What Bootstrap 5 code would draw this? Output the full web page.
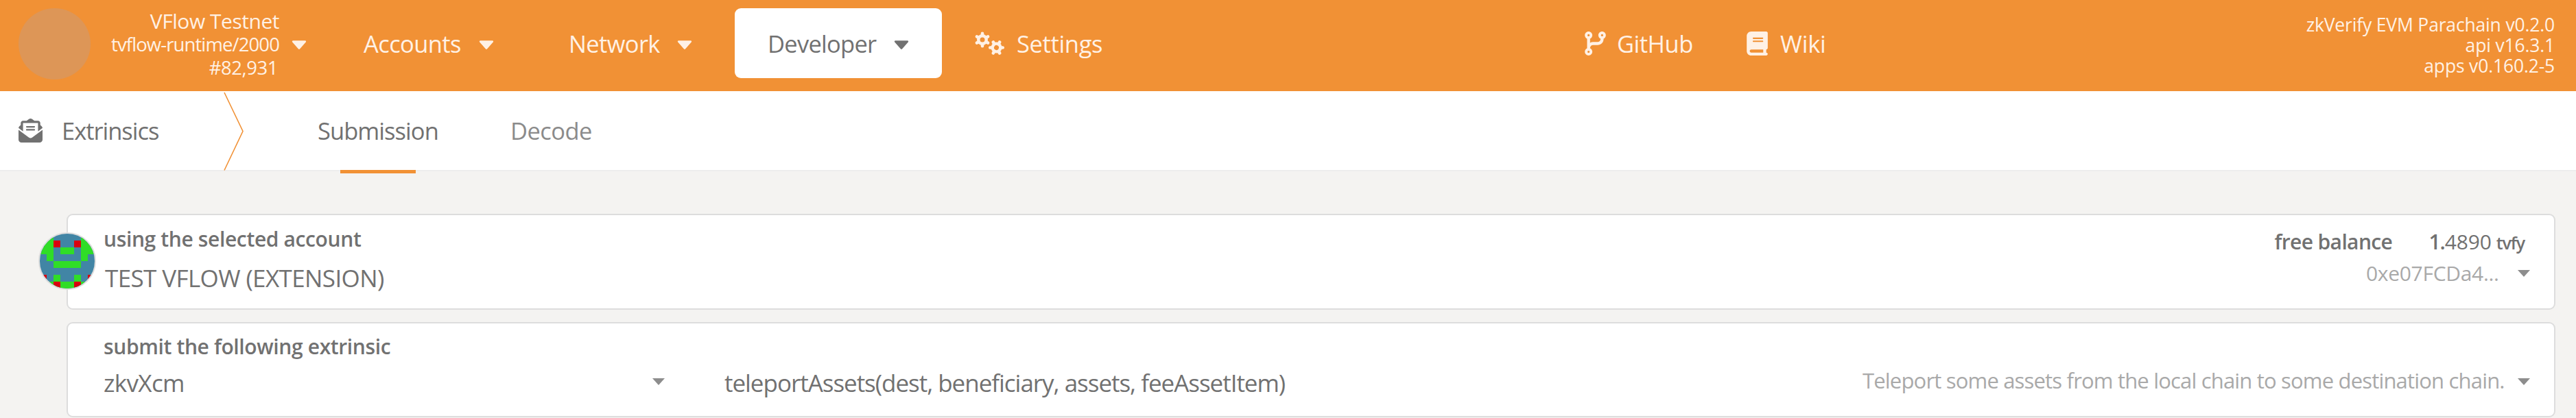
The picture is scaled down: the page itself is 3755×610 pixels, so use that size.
<!DOCTYPE html>
<html lang="en">
<head>
<meta charset="utf-8">
<title>Extrinsics</title>
<link href="https://cdn.jsdelivr.net/npm/bootstrap@5.3.0/dist/css/bootstrap.min.css" rel="stylesheet">
<style>
:root { --accent: #f19135; --ink: #717171; --pale: #fff1e5; }
body { background: #f4f3f1; color: var(--ink); font-family: "Open Sans", "Noto Sans", sans-serif; font-size: 34.5px; line-height: 1; overflow: hidden; }
svg { display: block; fill: currentColor; flex: none; }
.topbar { height: 133px; background: var(--accent); color: var(--pale); }
.topbar .brand-dot { width: 105px; height: 104px; margin: 12px 0 0 27px; background: #dd9657; }
.chain { width: 275px; padding-top: 14px; font-size: 27.5px; line-height: 34px; letter-spacing: -.9px; }
.chain .chain-name { font-size: 30px; letter-spacing: -.47px; }
.chain .best { letter-spacing: -.46px; padding-right: 2px; }
.tri { width: 22px; height: 35px; }
.menu-row { height: 102px; margin-top: 12px; line-height: 102px; letter-spacing: -.65px; }
.menu-row .item { padding-top: 2px; }
.menu-row .active-tab { width: 302px; height: 102px; padding-left: 48px; border-radius: 9px; background: #fff; color: var(--ink); letter-spacing: -.74px; }
.versions { padding-top: 21px; margin-right: 31px; font-size: 26.5px; line-height: 30px; letter-spacing: -.17px; }
.subbar { height: 117px; background: #fff; border-bottom: 2px solid #ededed; line-height: 115px; padding-left: 27px; }
.tab-on { width: 178px; }
.tab-on::after { content: ""; position: absolute; left: 33px; top: 115px; width: 110px; height: 5px; background: var(--accent); }
.panel { margin: 0 30px 18px 97px; background: #fff; border: 2px solid #ddd; border-radius: 9px; padding-left: 52px; }
.panel-a { margin-top: 62px; height: 140px; }
.panel-b { height: 139px; }
.lbl { font-size: 30px; font-weight: 600; line-height: 40px; letter-spacing: -.37px; }
.val { font-size: 35px; line-height: 50px; }
.hint { color: #a9a9a9; font-size: 30px; line-height: 40px; }
.drop { width: 0; height: 0; border: 9px solid transparent; border-top: 10px solid #8d8d8d; border-bottom: 0; flex: none; }
.ident { left: -43px; top: 25px; width: 84px; height: 84px; border: 2px solid #ddd; background: #4185a5; }
</style>
</head>
<body>
<header class="topbar d-flex align-items-start text-nowrap">
  <div class="brand-dot rounded-circle"></div>
  <div class="chain text-end">
    <div class="chain-name">VFlow Testnet</div>
    <div>tvflow-runtime/2000</div>
    <div class="best">#82,931</div>
  </div>
  <nav class="menu-row d-flex align-items-center">
    <svg class="tri" style="margin-left:18px" viewBox="0 0 320 512"><path id="caret" d="M31.3 192h257.3c17.8 0 26.7 21.5 14.1 34.1L174.1 374.8c-7.8 7.8-20.5 7.8-28.3 0L17.2 226.1C4.6 213.5 13.5 192 31.3 192z"/></svg>
    <div class="item" style="margin-left:83px;width:168px;letter-spacing:-.6px">Accounts</div>
    <svg class="tri" viewBox="0 0 320 512"><use href="#caret"/></svg>
    <div class="item" style="margin-left:109px;width:158px">Network</div>
    <svg class="tri" viewBox="0 0 320 512"><use href="#caret"/></svg>
    <div class="active-tab d-flex align-items-center" style="margin-left:62px">
      <div class="item" style="width:184px">Developer</div>
      <svg class="tri" viewBox="0 0 320 512"><use href="#caret"/></svg>
    </div>
    <svg style="margin-left:48px" width="43" height="35" viewBox="0 0 43 35">
      <g id="cog" transform="translate(11 12)" stroke="currentColor" stroke-width="4.6" stroke-linecap="round">
        <circle r="6" stroke-width="4"/>
        <path d="M0-9.2V9.2M-8-4.6L8 4.6M-8 4.6L8-4.6"/>
        <circle r="3.5" fill="#f19135" stroke="none"/>
      </g>
      <g transform="translate(31.5 23.5) rotate(30) translate(-11 -12)"><use href="#cog"/></g>
    </svg>
    <div class="item" style="margin-left:18px;width:126px;letter-spacing:-.35px">Settings</div>
    <svg style="margin-left:702px" width="31" height="35" viewBox="0 0 448 512"><path d="M80 104a24 24 0 1 0 0-48 24 24 0 1 0 0 48zm80-24c0 32.800-19.700 61-48 73.300v87.800c18.800-10.900 40.700-17.100 64-17.100h96c35.300 0 64-28.700 64-64v-6.700C307.700 141 288 112.800 288 80c0-44.200 35.800-80 80-80s80 35.800 80 80c0 32.800-19.700 61-48 73.300V160c0 70.700-57.300 128-128 128H176c-35.300 0-64 28.700-64 64v6.700c28.300 12.300 48 40.500 48 73.300c0 44.200-35.800 80-80 80s-80-35.800-80-80c0-32.800 19.700-61 48-73.300V352 153.300C19.700 141 0 112.800 0 80C0 35.800 35.800 0 80 0s80 35.800 80 80zm232 0a24 24 0 1 0-48 0 24 24 0 1 0 48 0zM80 456a24 24 0 1 0 0-48 24 24 0 1 0 0 48z"/></svg>
    <div class="item" style="margin-left:16px;width:110px;letter-spacing:-.5px">GitHub</div>
    <svg style="margin-left:79px" width="31" height="35" viewBox="0 0 448 512"><path d="M96 0C43 0 0 43 0 96V416c0 53 43 96 96 96H384h32c17.700 0 32-14.300 32-32s-14.300-32-32-32V384c17.700 0 32-14.300 32-32V32c0-17.700-14.300-32-32-32H384 96zm0 384H352v64H96c-17.700 0-32-14.300-32-32s14.300-32 32-32zm32-240c0-8.800 7.200-16 16-16H336c8.800 0 16 7.200 16 16s-7.200 16-16 16H144c-8.800 0-16-7.200-16-16zm16 48H336c8.800 0 16 7.200 16 16s-7.200 16-16 16H144c-8.800 0-16-7.200-16-16s7.200-16 16-16z"/></svg>
    <div class="item" style="margin-left:18px;letter-spacing:-.2px">Wiki</div>
  </nav>
  <div class="versions text-end ms-auto">
    <div>zkVerify EVM Parachain v0.2.0</div>
    <div>api v16.3.1</div>
    <div>apps v0.160.2-5</div>
  </div>
</header>

<div class="subbar d-flex align-items-center text-nowrap">
  <svg width="35" height="35" viewBox="0 0 512 512"><path d="M215.400 96H144 107.800 96v8.800V144v40.400 89L.2 202.500c1.600-18.100 10.900-34.900 25.700-45.800L48 140.300V96c0-26.500 21.500-48 48-48h76.600l49.900-36.900C232.200 3.900 243.900 0 256 0s23.800 3.900 33.500 11L339.400 48H416c26.500 0 48 21.500 48 48v44.300l22.100 16.400c14.800 10.900 24.100 27.700 25.700 45.800L416 273.400v-89V144 104.800 96H404.200 368 296.600 215.400zM0 448V242.100L217.600 403.300c11.100 8.200 24.600 12.700 38.400 12.700s27.300-4.400 38.400-12.700L512 242.100V448c0 35.300-28.700 64-64 64H64c-35.300 0-64-28.700-64-64zM176 160H336c8.800 0 16 7.200 16 16s-7.200 16-16 16H176c-8.800 0-16-7.200-16-16s7.200-16 16-16zm0 64H336c8.800 0 16 7.200 16 16s-7.200 16-16 16H176c-8.800 0-16-7.200-16-16s7.200-16 16-16z"/></svg>
  <div style="margin-left:28px;width:236px;letter-spacing:-1.020px">Extrinsics</div>
  <svg width="30" height="115" viewBox="0 0 30 115" overflow="visible"><path d="M1 2L28 58.500L1 115.500" fill="none" stroke="#f19135" stroke-width="1.600"/></svg>
  <div class="tab-on position-relative" style="margin-left:107px;letter-spacing:-.950px">Submission</div>
  <div style="margin-left:103px;letter-spacing:-.560px;color:#8b8b8b">Decode</div>
</div>

<section class="panel panel-a position-relative d-flex justify-content-between text-nowrap">
  <svg class="ident position-absolute rounded-circle" viewBox="0 0 8 8" shape-rendering="crispEdges">
    <path fill="#30dd27" d="M0 0h2v4H1V3H0zM6 0h2v3H7v1H6zM3 2h2v1H3zM2 4h4v1H2zM2 6h1v1h2V6h1v1h2v1H0V7h2z"/>
    <path fill="#d9000f" d="M2 1h1v1H2zM5 1h1v1H5zM0 6h1v1H0zM7 6h1v1H7zM2 7h1v1H2zM5 7h1v1H5z"/>
  </svg>
  <div>
    <div class="lbl" style="margin-top:15px">using the selected account</div>
    <div class="val" style="margin:12px 0 0 2px;letter-spacing:-.610px">TEST VFLOW (EXTENSION)</div>
  </div>
  <div class="d-flex flex-column align-items-end" style="margin-right:35px">
    <div class="lbl d-flex align-items-baseline" style="margin:19px 8px 0 0">
      <span style="width:225px;letter-spacing:-.630px">free balance</span><span style="letter-spacing:-1.100px">1.</span><span class="fw-normal" style="letter-spacing:-.150px;width:75px">4890</span><span style="font-size:25px;letter-spacing:-1.100px">tvfy</span>
    </div>
    <div class="hint d-flex align-items-center" style="margin-top:5px;letter-spacing:-.310px">
      <span style="width:221px">0xe07FCDa4...</span><i class="drop"></i>
    </div>
  </div>
</section>

<section class="panel panel-b text-nowrap">
  <div class="lbl" style="padding-top:14px">submit the following extrinsic</div>
  <div class="d-flex align-items-center val" style="margin:8px 35px 0 0">
    <div style="width:800px;letter-spacing:-.650px">zkvXcm</div>
    <i class="drop mb-1"></i>
    <div style="margin-left:87px;letter-spacing:-1.030px">teleportAssets(dest, beneficiary, assets, feeAssetItem)</div>
    <div class="hint ms-auto mb-2" style="font-size:31px;width:955px;letter-spacing:-.820px">Teleport some assets from the local chain to some destination chain.</div>
    <i class="drop mb-1"></i>
  </div>
</section>
<script src="https://cdn.jsdelivr.net/npm/bootstrap@5.3.0/dist/js/bootstrap.bundle.min.js"></script>
</body>
</html>
